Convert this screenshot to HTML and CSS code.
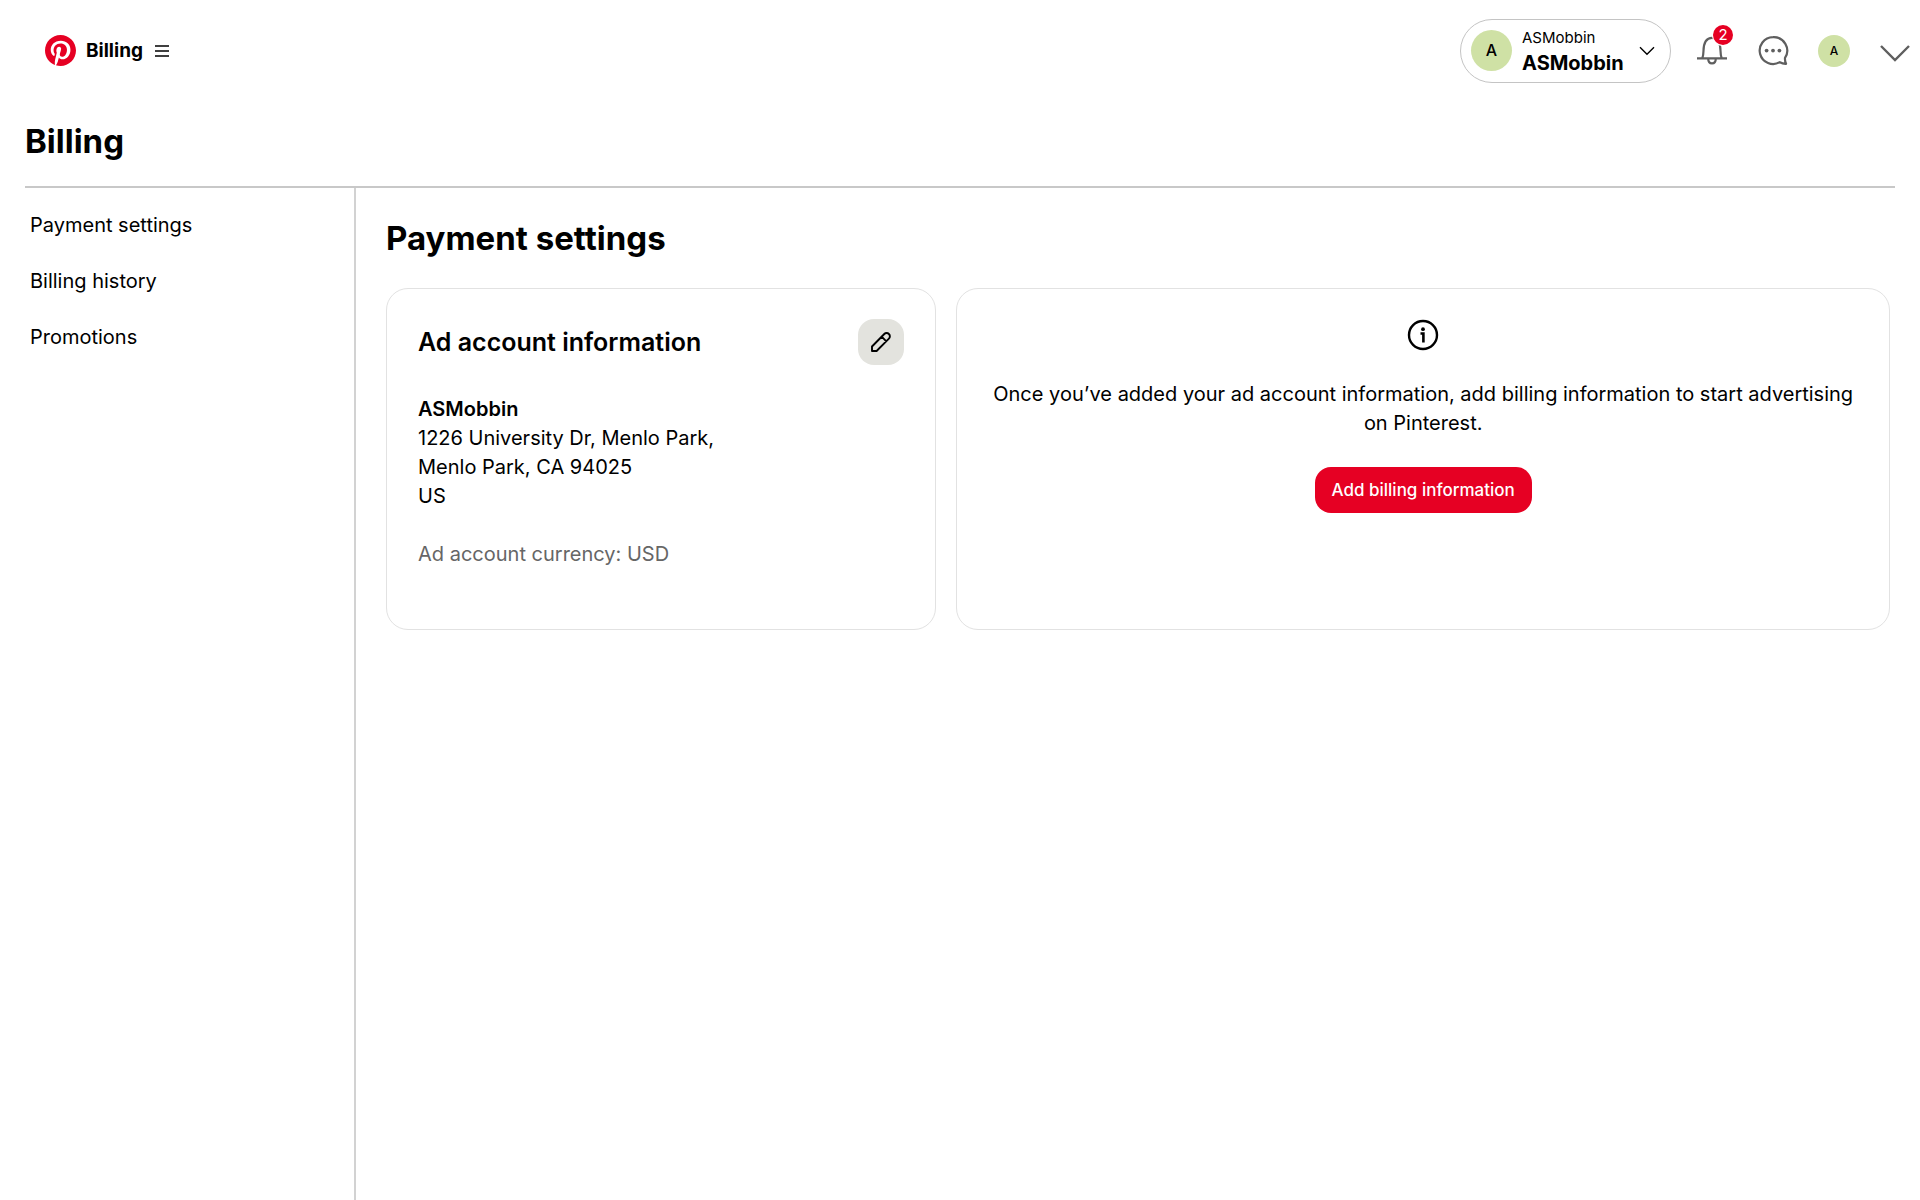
FILE: index.html
```html
<!DOCTYPE html>
<html lang="en">
<head>
<meta charset="utf-8">
<meta name="viewport" content="width=device-width, initial-scale=1">
<title>Billing</title>
<link rel="stylesheet" href="styles.css">
</head>
<body>
<header class="topbar">
  <a class="brand" href="#" aria-label="Pinterest home">
    <svg width="31" height="31" viewBox="0 0 24 24" aria-hidden="true"><circle cx="12" cy="12" r="11.5" fill="#fff"/><path fill="#e60023" d="M0 12c0 5.123 3.211 9.497 7.73 11.218-.11-.937-.227-2.482.025-3.566.217-.932 1.401-5.938 1.401-5.938s-.357-.715-.357-1.774c0-1.66.962-2.9 2.161-2.9 1.02 0 1.512.765 1.512 1.682 0 1.025-.653 2.557-.99 3.978-.281 1.189.597 2.159 1.769 2.159 2.123 0 3.756-2.239 3.756-5.471 0-2.861-2.056-4.86-4.991-4.86-3.398 0-5.393 2.549-5.393 5.184 0 1.027.395 2.127.889 2.726a.36.36 0 0 1 .083.343c-.091.378-.293 1.189-.332 1.355-.053.218-.173.265-.4.159-1.492-.694-2.424-2.875-2.424-4.627 0-3.769 2.737-7.229 7.892-7.229 4.144 0 7.365 2.953 7.365 6.899 0 4.117-2.595 7.431-6.199 7.431-1.211 0-2.348-.63-2.738-1.373 0 0-.599 2.282-.744 2.84-.282 1.084-1.064 2.456-1.549 3.235C9.584 23.815 10.77 24 12 24c6.627 0 12-5.373 12-12S18.627 0 12 0 0 5.373 0 12"/></svg>
  </a>
  <button class="menu-button" type="button">
    <span>Billing</span>
    <svg width="14" height="12" viewBox="0 0 14 12" aria-hidden="true"><path d="M0 1h14M0 6h14M0 11h14" stroke="#000" stroke-width="1.4"/></svg>
  </button>
  <div class="tools">
    <button class="account" type="button">
      <span class="avatar avatar-large">A</span>
      <span class="account-text">
        <span class="account-owner">ASMobbin</span>
        <span class="account-name">ASMobbin</span>
      </span>
      <svg width="16" height="10" viewBox="0 0 16 10" aria-hidden="true"><path d="M1 1.2l7 7 7-7" fill="none" stroke="#000" stroke-width="1.4"/></svg>
    </button>
    <button class="icon-button" type="button" aria-label="Notifications, 2 new">
      <svg width="32" height="32" viewBox="0 0 32 32" fill="none" stroke="#5f5f5f" stroke-width="2.2" aria-hidden="true"><path d="M1 23.300h30M6.400 23c.9-2.200 1-4.400 1.100-7.200C7.700 7 10.600 2.800 16 2.800S24.300 7 24.500 15.800c.1 2.800.2 5 1.100 7.200M12.200 23.500c0 3.200 1.400 4.900 3.800 4.900s3.800-1.700 3.800-4.900"/></svg>
      <span class="badge">2</span>
    </button>
    <button class="icon-button" type="button" aria-label="Messages">
      <svg width="32" height="32" viewBox="0 0 32 32" aria-hidden="true"><path d="M16 2.200a13.400 13.400 0 1 0 6.800 25c1.900 1.100 4.200 1.700 6.300 1.600-.9-1.600-1.300-3.700-1.100-5.900A13.400 13.400 0 0 0 16 2.200z" fill="none" stroke="#5f5f5f" stroke-width="2.200" stroke-linejoin="round"/><g fill="#5f5f5f"><circle cx="9.600" cy="15.600" r="1.900"/><circle cx="16" cy="15.600" r="1.900"/><circle cx="22.400" cy="15.600" r="1.900"/></g></svg>
    </button>
    <button class="icon-button" type="button" aria-label="Your profile"><span class="avatar avatar-small">A</span></button>
    <button class="icon-button" type="button" aria-label="More options">
      <svg width="32" height="32" viewBox="0 0 32 32" aria-hidden="true"><path d="M2 11l14 14 14-14" fill="none" stroke="#5f5f5f" stroke-width="2.400"/></svg>
    </button>
  </div>
</header>
<h1 class="page-title">Billing</h1>
<div class="layout">
  <nav class="sidebar" aria-label="Billing sections">
    <a href="#">Payment settings</a>
    <a href="#">Billing history</a>
    <a href="#">Promotions</a>
  </nav>
  <main class="content">
    <h2 class="section-title">Payment settings</h2>
    <div class="cards">
      <section class="card">
        <div class="card-head">
          <h3>Ad account information</h3>
          <button class="edit" type="button" aria-label="Edit ad account information">
            <svg width="22" height="22" viewBox="0 0 22 22" fill="none" stroke="#000" stroke-width="1.900" stroke-linejoin="round" aria-hidden="true"><path d="M2 15.500L14.300 3a3.200 3.200 0 0 1 4.600 0 3.200 3.200 0 0 1 0 4.600L6.600 20H2zM11.700 5.700l4.600 4.600"/></svg>
          </button>
        </div>
        <address class="address"><strong>ASMobbin</strong><br>1226 University Dr, Menlo Park,<br>Menlo Park, CA 94025<br>US</address>
        <p class="currency">Ad account currency: USD</p>
      </section>
      <section class="card notice">
        <svg width="32" height="32" viewBox="0 0 32 32" aria-hidden="true"><circle cx="16" cy="16" r="14" fill="none" stroke="#000" stroke-width="2.400"/><circle cx="16" cy="10.200" r="1.900" fill="#000"/><path d="M13.500 14.500H16.400V23.500" fill="none" stroke="#000" stroke-width="2.600"/></svg>
        <p>Once you’ve added your ad account information, add billing information to start advertising on Pinterest.</p>
        <button class="primary" type="button">Add billing information</button>
      </section>
    </div>
  </main>
</div>
</body>
</html>
```
FILE: styles.css
```css
* { box-sizing: border-box; }
body {
  margin: 0;
  min-height: 100vh;
  display: flex;
  flex-direction: column;
  background: #fff;
  color: #000;
  font: 20px/29px Inter, "Liberation Sans", sans-serif;
}
h1, h2, h3, p { margin: 0; }
a { color: inherit; text-decoration: none; }
button {
  margin: 0;
  padding: 0;
  border: 0;
  background: none;
  color: inherit;
  font: inherit;
  cursor: pointer;
}
svg { display: block; flex: none; }

.topbar {
  display: flex;
  align-items: center;
  height: 101px;
  padding: 0 9px 0 45px;
}
.menu-button {
  display: flex;
  align-items: center;
  gap: 12px;
  margin-left: 10px;
  font-weight: 700;
  font-size: 19px;
}
.tools {
  display: flex;
  align-items: center;
  gap: 29px;
  margin-left: auto;
}
.account {
  display: flex;
  align-items: center;
  gap: 10px;
  height: 64px;
  width: 211px;
  margin-right: -4px;
  padding: 0 15px 0 10px;
  border: 1px solid #c4c4c4;
  border-radius: 32px;
  text-align: left;
}
.account > svg { margin-left: auto; }
.account-text { display: flex; flex-direction: column; }
.account-owner { font-size: 15px; line-height: 24px; }
.account-name { font-size: 20px; line-height: 26px; font-weight: 700; }
.avatar {
  display: flex;
  align-items: center;
  justify-content: center;
  border-radius: 50%;
  background: #cfe1a5;
  font-weight: 500;
}
.avatar-large { width: 41px; height: 41px; font-size: 16px; }
.avatar-small { width: 32px; height: 32px; font-size: 12px; }
.icon-button { position: relative; width: 32px; height: 32px; }
.badge {
  position: absolute;
  top: -10px;
  right: -5px;
  width: 20px;
  height: 20px;
  border-radius: 50%;
  background: #e60023;
  box-shadow: 0 0 0 1px #fff;
  color: #fff;
  font-size: 15px;
  line-height: 20px;
  text-align: center;
}

.page-title {
  margin: 0 25px;
  padding: 16px 0 21px;
  border-bottom: 2px solid #c8c8c8;
  font-size: 33px;
  line-height: 48px;
  font-weight: 700;
}
.layout { display: flex; flex: 1; }
.sidebar {
  display: flex;
  flex-direction: column;
  gap: 27px;
  width: 356px;
  padding: 23px 30px;
  border-right: 2px solid #d2d2d2;
}
.content { flex: 1; padding: 26px 30px 30px; }
.section-title { font-size: 33px; line-height: 48px; font-weight: 700; }
.cards {
  display: grid;
  grid-template-columns: 550fr 933fr;
  gap: 20px;
  margin-top: 26px;
}
.card {
  min-height: 342px;
  padding: 30px 31px;
  border: 1px solid #e2e2e2;
  border-radius: 22px;
}
.card-head {
  display: flex;
  align-items: center;
  justify-content: space-between;
}
.card-head h3 { font-size: 25px; line-height: 32px; font-weight: 600; }
.edit {
  display: flex;
  align-items: center;
  justify-content: center;
  width: 46px;
  height: 46px;
  border-radius: 16px;
  background: #e3e3de;
}
.address { margin-top: 30px; font-style: normal; }
.address strong { font-weight: 600; }
.currency { margin-top: 29px; color: #666; }
.notice {
  display: flex;
  flex-direction: column;
  align-items: center;
  text-align: center;
}
.notice p { margin: 29px 0; }
.primary {
  height: 46px;
  padding: 0 17px;
  border-radius: 16px;
  background: #e60023;
  color: #fff;
  font-size: 17px;
  font-weight: 500;
}
```
